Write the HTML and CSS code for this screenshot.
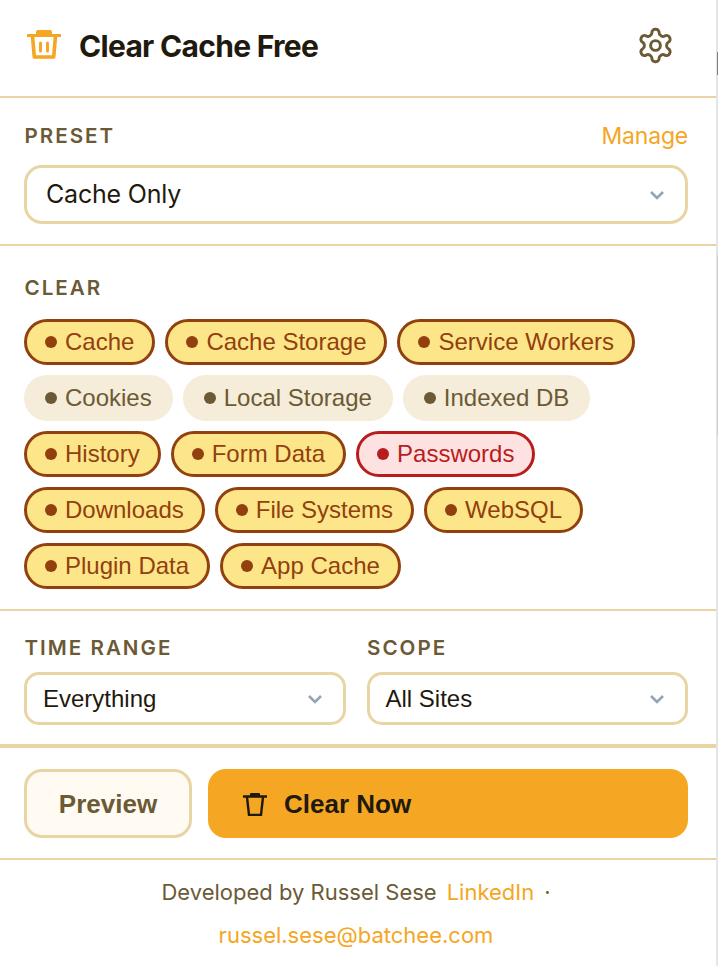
FILE: index.html
```html
<!DOCTYPE html>
<html lang="en">
<head>
<meta charset="utf-8">
<title>Clear Cache Free</title>
<link rel="stylesheet" href="styles.css">
</head>
<body>
<div class="popup">
  <header class="header">
    <div class="brand">
      <svg class="logo" viewBox="0 0 34 32" aria-hidden="true">
        <path class="logo-fill" d="M11 1h12a2 2 0 0 1 2 2v2h8a1.300 1.300 0 0 1 0 3H1a1.300 1.300 0 0 1 0-3h8V3a2 2 0 0 1 2-2z"/>
        <path class="logo-line" d="M5.500 7l1.800 21h19.400l1.800-21"/>
        <path class="logo-line thin" d="M13.500 14v8M20.500 14v8"/>
      </svg>
      <h1 class="title">Clear Cache Free</h1>
    </div>
    <svg class="gear" viewBox="0 0 24 24" aria-hidden="true">
      <path d="M12.220 2h-.44a2 2 0 0 0-2 2v.18a2 2 0 0 1-1 1.730l-.43.25a2 2 0 0 1-2 0l-.15-.08a2 2 0 0 0-2.730.73l-.22.38a2 2 0 0 0 .73 2.730l.15.1a2 2 0 0 1 1 1.720v.51a2 2 0 0 1-1 1.740l-.15.09a2 2 0 0 0-.73 2.730l.22.38a2 2 0 0 0 2.730.73l.15-.08a2 2 0 0 1 2 0l.43.25a2 2 0 0 1 1 1.730V20a2 2 0 0 0 2 2h.44a2 2 0 0 0 2-2v-.18a2 2 0 0 1 1-1.730l.43-.25a2 2 0 0 1 2 0l.15.08a2 2 0 0 0 2.730-.73l.22-.39a2 2 0 0 0-.73-2.730l-.15-.08a2 2 0 0 1-1-1.740v-.5a2 2 0 0 1 1-1.740l.15-.09a2 2 0 0 0 .73-2.730l-.22-.38a2 2 0 0 0-2.730-.73l-.15.08a2 2 0 0 1-2 0l-.43-.25a2 2 0 0 1-1-1.730V4a2 2 0 0 0-2-2z"/>
      <circle cx="12" cy="12" r="3"/>
    </svg>
  </header>

  <section class="section preset">
    <div class="label-row">
      <span class="label">PRESET</span>
      <a class="manage">Manage</a>
    </div>
    <div class="select select-large">
      <span class="select-text-large">Cache Only</span>
      <svg class="chevron" viewBox="0 0 16 10" aria-hidden="true"><path d="M2 2l6 6 6-6"/></svg>
    </div>
  </section>

  <section class="section clear">
    <div class="label">CLEAR</div>
    <div class="chips">
      <span class="chip on"><i class="dot"></i>Cache</span>
      <span class="chip on"><i class="dot"></i>Cache Storage</span>
      <span class="chip on"><i class="dot"></i>Service Workers</span>
      <span class="chip off"><i class="dot"></i>Cookies</span>
      <span class="chip off"><i class="dot"></i>Local Storage</span>
      <span class="chip off"><i class="dot"></i>Indexed DB</span>
      <span class="chip on"><i class="dot"></i>History</span>
      <span class="chip on"><i class="dot"></i>Form Data</span>
      <span class="chip danger"><i class="dot"></i>Passwords</span>
      <span class="chip on"><i class="dot"></i>Downloads</span>
      <span class="chip on"><i class="dot"></i>File Systems</span>
      <span class="chip on"><i class="dot"></i>WebSQL</span>
      <span class="chip on"><i class="dot"></i>Plugin Data</span>
      <span class="chip on"><i class="dot"></i>App Cache</span>
    </div>
  </section>

  <section class="section options">
    <div class="field">
      <div class="label">TIME RANGE</div>
      <div class="select select-small">
        <span>Everything</span>
        <svg class="chevron" viewBox="0 0 16 10" aria-hidden="true"><path d="M2 2l6 6 6-6"/></svg>
      </div>
    </div>
    <div class="field">
      <div class="label">SCOPE</div>
      <div class="select select-small">
        <span>All Sites</span>
        <svg class="chevron" viewBox="0 0 16 10" aria-hidden="true"><path d="M2 2l6 6 6-6"/></svg>
      </div>
    </div>
  </section>

  <section class="actions">
    <button class="btn btn-preview">Preview</button>
    <button class="btn btn-clear">
      <svg class="btn-icon" viewBox="0 0 26 24" aria-hidden="true">
        <path d="M1 4.500h24M5 5l2 18h12l2-18"/>
        <path class="btn-icon-top" d="M8 4V2a1 1 0 0 1 1-1h8a1 1 0 0 1 1 1v2z"/>
      </svg>
      Clear Now
    </button>
  </section>

  <footer class="footer">
    <div class="footer-line"><span class="dev">Developed by Russel Sese</span><a class="link">LinkedIn</a><span class="sep">·</span></div>
    <div class="footer-line"><a class="link">russel.sese@batchee.com</a></div>
  </footer>
</div>
<div class="edge-mark edge-dark"></div>
<div class="edge-mark edge-light"></div>
</body>
</html>
```
FILE: styles.css
```css
* { box-sizing: border-box; }
html, body { margin: 0; padding: 0; background: #fff; }
body {
  position: relative;
  width: 718px;
  height: 966px;
  overflow: hidden;
  font-family: "Liberation Sans", Arial, sans-serif;
  color: #1f1a0e;
}
.popup {
  width: 716px;
  height: 966px;
  background: #fff;
  box-shadow: 2px 0 0 #e5e5e5;
}
.edge-mark { position: absolute; left: 717px; width: 1px; }
.edge-dark { top: 52px; height: 23px; background: #808080; }
.edge-light { top: 255px; height: 182px; background: #d0d0d0; }
.header {
  height: 98px;
  padding: 0 41px 6px 27px;
  display: flex;
  align-items: center;
  justify-content: space-between;
  border-bottom: 2px solid #e8d5a3;
}
.brand { display: flex; align-items: center; gap: 18px; }
.logo { width: 34px; height: 32px; display: block; }
.logo-fill { fill: #f5a623; }
.logo-line { fill: none; stroke: #f5a623; stroke-width: 3.600; stroke-linejoin: round; }
.logo-line.thin { stroke-width: 3; stroke-linecap: round; }
.title {
  margin: 0;
  padding-top: 2px;
  font: 700 30px/1.2 Inter, sans-serif;
  letter-spacing: -0.7px;
  color: #1f1a0e;
}
.gear {
  width: 39px;
  height: 39px;
  fill: none;
  stroke: #6b5a35;
  stroke-width: 1.800;
  stroke-linecap: round;
  stroke-linejoin: round;
}
.section { border-bottom: 2px solid #e8d5a3; padding: 0 28px 0 24px; }
.preset { height: 148px; padding-top: 24px; }
.label-row { display: flex; justify-content: space-between; align-items: center; height: 28px; margin-bottom: 15px; }
.label {
  padding-left: 0.500px;
  font: 600 20.600px/28px Inter, sans-serif;
  letter-spacing: 2px;
  color: #6b5a35;
}
.manage { font: 400 23px/28px Inter, sans-serif; letter-spacing: -0.2px; color: #f5a623; }
.select {
  display: flex;
  align-items: center;
  justify-content: space-between;
  border: 3px solid #e8d5a3;
  background: #fff;
  color: #1f1a0e;
}
.select-large { height: 59px; border-radius: 18px; padding: 0 20px 0 19px; }
.select-text-large { font: 400 25px/1 Inter, sans-serif; letter-spacing: -0.2px; }
.select-small { height: 53px; border-radius: 15px; padding: 0 20px 0 16px; font-size: 24px; }
.chevron { width: 16px; height: 10px; fill: none; stroke: #94a3b8; stroke-width: 2.600; flex: none; }
.clear { height: 365px; padding-top: 28px; }
.chips { display: flex; flex-wrap: wrap; gap: 10px; margin-top: 17px; }
.chip {
  display: inline-flex;
  align-items: center;
  height: 46px;
  padding: 0 18px;
  border: 3px solid transparent;
  border-radius: 23px;
  font-size: 24px;
  white-space: nowrap;
}
.dot { width: 12px; height: 12px; border-radius: 50%; margin-right: 8px; background: currentColor; flex: none; }
.chip.on { background: #fde68a; border-color: #92400e; color: #92400e; }
.chip.off { background: #f5ecd9; border-color: #f5ecd9; color: #6b5a35; }
.chip.danger { background: #fee2e2; border-color: #b91c1c; color: #b91c1c; }
.options {
  height: 137px;
  padding-top: 23px;
  display: flex;
  gap: 21px;
  border-bottom: 4px solid #e8d5a3;
}
.field { flex: 1; min-width: 0; }
.field .label { margin-bottom: 10px; }
.actions { height: 112px; padding: 21px 28px 0 24px; display: flex; gap: 16px; border-bottom: 2px solid #e8d5a3; }
.btn {
  height: 69px;
  border-radius: 18px;
  font: 700 26px/1 "Liberation Sans", Arial, sans-serif;
  display: flex;
  align-items: center;
  justify-content: center;
}
.btn-preview { width: 168px; flex: none; background: #fffaf2; border: 3px solid #e8d5a3; color: #6b5a35; }
.btn-clear { flex: 1; justify-content: flex-start; padding: 0 0 0 34px; gap: 16px; background: #f5a623; border: 0; color: #1f1a0e; }
.btn-icon { width: 26px; height: 24px; fill: none; stroke: #1f1a0e; stroke-width: 2.400; flex: none; }
.btn-icon-top { fill: #1f1a0e; stroke: none; }
.footer { padding: 10px 4px 0 0; text-align: center; font: 400 22px/44px Inter, sans-serif; color: #6b5a35; }
.footer-line { height: 43px; }
.dev { margin-right: 10px; }
.link { color: #f5a623; }
.sep { margin-left: 10px; }
```
